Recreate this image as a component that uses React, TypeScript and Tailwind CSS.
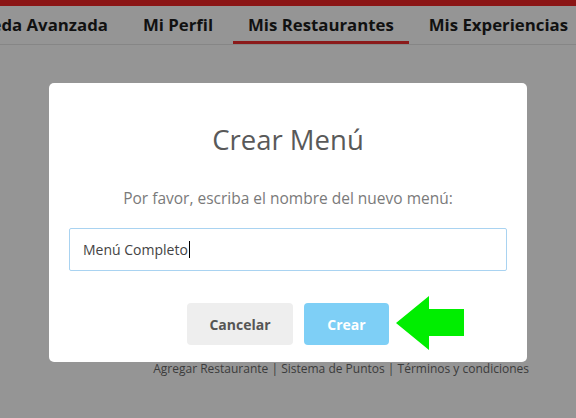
import React from "react";

const tabs = [
  { label: "Búsqueda Avanzada", cls: "px-[15px]" },
  { label: "Mi Perfil", cls: "px-[15px]" },
  { label: "Mis Restaurantes", cls: "px-[15px] text-[#8e1c1c] border-b-[3px] border-[#8b1a1a] pt-[3px]" },
  { label: "Mis Experiencias", cls: "pl-[15px]" },
];

export default function App() {
  return (
    <div
      className="relative w-[576px] h-[418px] overflow-hidden bg-[#959595]"
      style={{ fontFamily: "'Open Sans', 'Liberation Sans', sans-serif" }}
    >
      {/* Header */}
      <div className="h-[6px] bg-[#8b1515]" />
      <nav className="flex justify-end gap-[5px] h-[39px] border-b border-[#868686] pr-[8px] overflow-hidden">
        {tabs.map((t) => (
          <div
            key={t.label}
            className={`shrink-0 whitespace-nowrap flex items-center text-[16.8px] font-bold leading-none text-[#111111] ${t.cls}`}
          >
            {t.label}
          </div>
        ))}
      </nav>

      {/* Footer links */}
      <div className="flex justify-end pr-[47px] pt-[315px] text-[12px] text-[#3c3c3c] whitespace-nowrap">
        Agregar Restaurante | Sistema de Puntos | Términos y condiciones
      </div>

      {/* Modal */}
      <div className="absolute left-[49px] top-[83px] w-[478px] h-[279px] bg-white rounded-[5px] flex flex-col items-center">
        <h2 className="mt-[43px] text-[27.5px] leading-none text-[#595959]">
          Crear Menú
        </h2>
        <p className="mt-[37px] text-[15.5px] leading-none text-[#7a7a7a]">
          Por favor, escriba el nombre del nuevo menú:
        </p>
        <div className="mt-[22px] w-[438px] h-[43px] border border-[#a9d3f1] rounded-[2px] flex items-center pl-[13px] text-[14px] text-[#444444]">
          Menú Completo
          <span className="ml-[1px] w-[1px] h-[17px] bg-black" />
        </div>
        <div className="mt-[32px] flex gap-[11px]">
          <button className="w-[106px] h-[42px] rounded-[4px] bg-[#eeeeee] text-[14px] font-bold text-[#555555]">
            Cancelar
          </button>
          <button className="w-[85px] h-[42px] rounded-[4px] bg-[#7ecff6] text-[14px] font-bold text-white">
            Crear
          </button>
        </div>
      </div>

      {/* Arrow */}
      <svg
        className="absolute left-[394px] top-[295px]"
        width="72"
        height="56"
        viewBox="0 0 72 56"
      >
        <polygon points="2,28 35,1 35,14 70,14 70,41 35,41 35,55" fill="#00ee00" />
      </svg>
    </div>
  );
}
